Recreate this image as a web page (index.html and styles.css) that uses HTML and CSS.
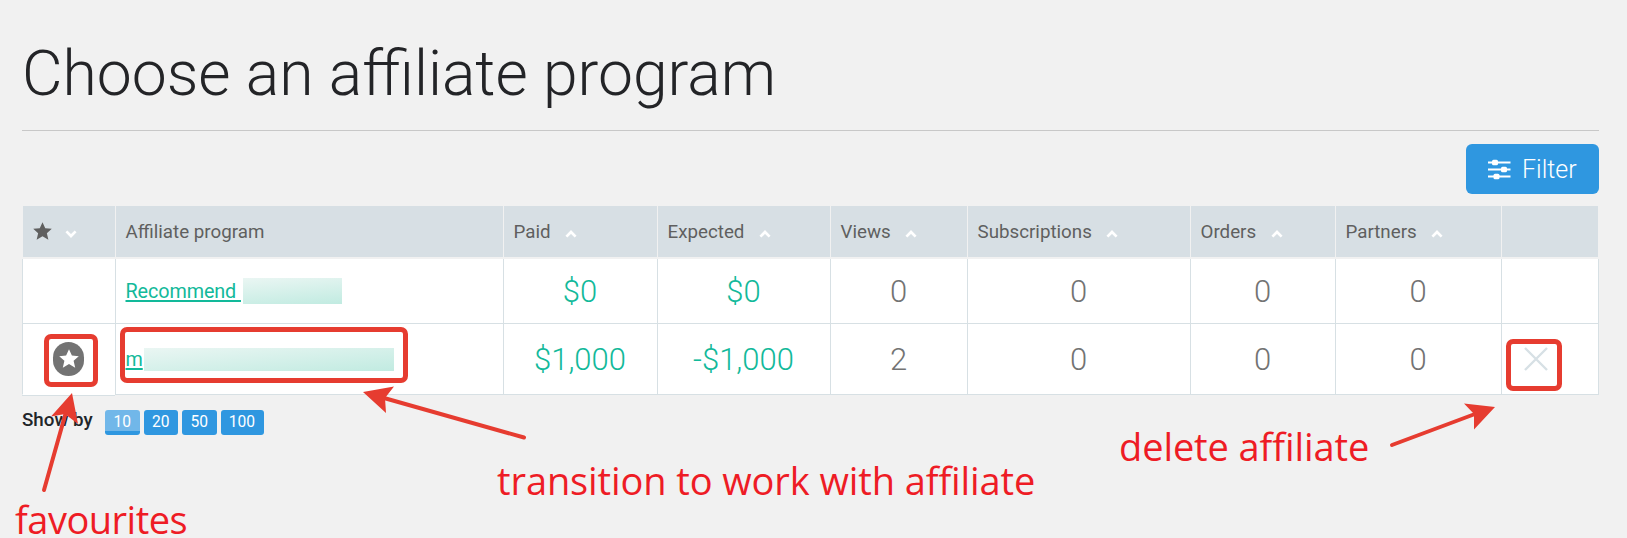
FILE: index.html
```html
<!DOCTYPE html>
<html lang="en">
<head>
    <meta charset="UTF-8">
    <meta name="viewport" content="width=device-width, initial-scale=1.0">
    <title>Choose an affiliate program</title>
    <link rel="stylesheet" href="styles.css">
</head>
<body>
    <svg class="defs" width="0" height="0">
        <symbol id="star" viewBox="0 0 20 19">
            <path d="M10 0.300l2.900 6.200 6.900.700-5.200 4.600 1.600 6.900-6.200-3.600-6.200 3.600 1.600-6.900L.2 7.200l6.900-.7z"/>
        </symbol>
        <symbol id="caret" viewBox="0 0 12 8">
            <path d="M1.400 6.600L6 2l4.600 4.600" fill="none" stroke="#fff" stroke-width="2.700"/>
        </symbol>
    </svg>

    <div class="container">
        <h1>Choose an affiliate program</h1>

        <div class="toolbar">
            <button class="btn-filter">
                <svg width="23" height="21" viewBox="0 0 23 21">
                    <path d="M0 3.500h22.500M0 10.500h22.500M0 17.500h22.500" stroke="#fff" stroke-width="2"/>
                    <rect x="4" y="0.700" width="6" height="5.600" rx="1.500" fill="#fff"/>
                    <rect x="13" y="7.700" width="6" height="5.600" rx="1.500" fill="#fff"/>
                    <rect x="5.500" y="14.700" width="6" height="5.600" rx="1.500" fill="#fff"/>
                </svg>
                <span>Filter</span>
            </button>
        </div>

        <table class="programs">
            <colgroup>
                <col class="col-fav">
                <col class="col-name">
                <col class="col-paid">
                <col class="col-expected">
                <col class="col-views">
                <col class="col-subs">
                <col class="col-orders">
                <col class="col-partners">
                <col class="col-delete">
            </colgroup>
            <thead>
                <tr>
                    <th><svg class="star"><use href="#star"/></svg><svg class="caret caret-down"><use href="#caret"/></svg></th>
                    <th>Affiliate program</th>
                    <th>Paid<svg class="caret"><use href="#caret"/></svg></th>
                    <th>Expected<svg class="caret"><use href="#caret"/></svg></th>
                    <th>Views<svg class="caret"><use href="#caret"/></svg></th>
                    <th>Subscriptions<svg class="caret"><use href="#caret"/></svg></th>
                    <th>Orders<svg class="caret"><use href="#caret"/></svg></th>
                    <th>Partners<svg class="caret"><use href="#caret"/></svg></th>
                    <th></th>
                </tr>
            </thead>
            <tbody>
                <tr class="row-first">
                    <td></td>
                    <td class="name"><div class="name-line"><a href="#">Recommend&nbsp;</a><span class="hidden-text hidden-short"></span></div></td>
                    <td class="money">$0</td>
                    <td class="money">$0</td>
                    <td>0</td>
                    <td>0</td>
                    <td>0</td>
                    <td>0</td>
                    <td></td>
                </tr>
                <tr class="row-second">
                    <td class="fav-cell"><span class="fav"><svg><use href="#star"/></svg></span></td>
                    <td class="name"><div class="name-line"><a href="#">m</a><span class="hidden-text hidden-long"></span></div></td>
                    <td class="money">$1,000</td>
                    <td class="money">-$1,000</td>
                    <td>2</td>
                    <td>0</td>
                    <td>0</td>
                    <td>0</td>
                    <td class="delete-cell">
                        <svg class="delete" viewBox="0 0 24 24">
                            <path d="M1 1l22 22M23 1L1 23" stroke="#d7e0e5" stroke-width="2.400"/>
                        </svg>
                    </td>
                </tr>
            </tbody>
        </table>

        <div class="pager">
            <b>Show by</b>
            <a class="page active" href="#">10</a>
            <a class="page" href="#">20</a>
            <a class="page" href="#">50</a>
            <a class="page page-wide" href="#">100</a>
        </div>
    </div>

    <!-- notes over the page -->
    <div class="frame frame-fav"></div>
    <div class="frame frame-name"></div>
    <div class="frame frame-delete"></div>

    <svg class="arrows" width="1627" height="538" viewBox="0 0 1627 538">
        <g stroke="#e63c30" stroke-width="4" stroke-linecap="round">
            <path d="M44 490L66 412"/>
            <path d="M524 437.500L384 398"/>
            <path d="M1392 445L1475 414"/>
        </g>
        <g fill="#e63c30">
            <path d="M72 393L51 416.500L65 414L78 424z"/>
            <path d="M363 392L394 386.500L385 398L386 413z"/>
            <path d="M1495 407L1464 403.500L1474 414L1474 429.500z"/>
        </g>
    </svg>

    <div class="note note-fav">favourites</div>
    <div class="note note-name">transition to work with affiliate</div>
    <div class="note note-delete">delete affiliate</div>
</body>
</html>
```
FILE: styles.css
```css
body {
    margin: 0;
    position: relative;
    height: 538px;
    overflow: hidden;
    background-color: #f1f1f1;
    font-family: Roboto, "Liberation Sans", sans-serif;
    color: #212529;
}
.defs {
    position: absolute;
}
.container {
    padding: 0 28px 0 22px;
}
h1 {
    box-sizing: border-box;
    height: 131px;
    margin: 0;
    padding-top: 36px;
    border-bottom: 1px solid #c8c8c8;
    font-size: 62.4px;
    font-weight: 300;
    line-height: 75px;
    color: #232427;
}
.toolbar {
    display: flex;
    justify-content: flex-end;
    padding: 13px 0 12px;
}
.btn-filter {
    display: flex;
    align-items: center;
    gap: 11px;
    width: 133px;
    height: 50px;
    padding: 0 0 0 22px;
    border: none;
    border-radius: 6px;
    background-color: #2f97e0;
    color: #fff;
    font-family: inherit;
    font-size: 25px;
    font-weight: 300;
}
.programs {
    width: 1577px;
    table-layout: fixed;
    border-collapse: separate;
    border-spacing: 0;
}
.col-fav { width: 93px; }
.col-name { width: 388px; }
.col-paid { width: 154px; }
.col-expected { width: 173px; }
.col-views { width: 137px; }
.col-subs { width: 223px; }
.col-orders { width: 145px; }
.col-partners { width: 166px; }
.col-delete { width: 98px; }
.programs th {
    box-sizing: border-box;
    height: 53px;
    padding: 0 0 0 9.5px;
    border-left: 1px solid #f1f1f1;
    border-bottom: 2px solid #f1f1f1;
    background-color: #d7dfe4;
    color: #5f5f5f;
    font-size: 18.75px;
    font-weight: 400;
    text-align: left;
    white-space: nowrap;
}
.programs th:last-child {
    border-right: 1px solid #f1f1f1;
}
.programs td {
    box-sizing: border-box;
    padding: 2px 1px 0 0;
    border-left: 1px solid #d7e0e4;
    border-bottom: 1px solid #d7e0e4;
    background-color: #fff;
    color: #737373;
    font-size: 31px;
    font-weight: 300;
    line-height: 36px;
    text-align: center;
}
.programs td:last-child {
    border-right: 1px solid #d7e0e4;
}
.row-first td {
    height: 65px;
}
.row-second td {
    height: 71px;
}
.programs td.money {
    color: #12b99a;
}
.programs td.name {
    padding: 0 0 0 9.5px;
    font-size: 19.8px;
    font-weight: 400;
    text-align: left;
}
.programs td.fav-cell,
.programs td.delete-cell {
    padding-top: 0;
}
.programs td.fav-cell {
    border-bottom-color: #fff;
    box-shadow: 0 1px #d7e0e4, -1px 0 0 -1px #d7e0e4;
}
.name-line {
    display: flex;
    align-items: center;
}
.name a {
    padding-top: 1px;
    color: #12b99a;
    letter-spacing: -0.1px;
    text-decoration: underline;
    text-decoration-thickness: 2px;
    text-underline-offset: 2px;
}
.hidden-text {
    background: linear-gradient(175deg, #eaf6f3, #c1ebe1);
}
.hidden-short {
    width: 99px;
    height: 26px;
    margin-left: 2px;
}
.hidden-long {
    width: 250px;
    height: 23px;
    margin-left: 1px;
}
.star {
    width: 19px;
    height: 18px;
    fill: #5f5f5f;
    vertical-align: -2px;
}
.caret {
    width: 12px;
    height: 8px;
    margin-left: 14.5px;
}
.caret-down {
    margin-left: 13px;
    transform: rotate(180deg);
}
.fav {
    display: inline-flex;
    align-items: center;
    justify-content: center;
    width: 31px;
    height: 34px;
    border-radius: 16px;
    background-color: #737373;
    vertical-align: middle;
    margin-bottom: 2px;
}
.fav svg {
    width: 20px;
    height: 19px;
    fill: #fff;
}
.delete {
    display: block;
    width: 24px;
    height: 24px;
    margin-left: 22px;
}
.pager {
    display: flex;
    align-items: center;
    gap: 4px;
    margin-top: 15px;
}
.pager b {
    width: 79px;
    margin-top: -4px;
    font-size: 18.75px;
    font-weight: 500;
    line-height: 25px;
}
.page {
    box-sizing: border-box;
    width: 34.5px;
    height: 25px;
    border-radius: 3px;
    background-color: #2f97e0;
    color: #fff;
    font-size: 15.6px;
    font-weight: 400;
    line-height: 24px;
    text-align: center;
    text-decoration: none;
}
.page-wide {
    width: 43px;
}
.page.active {
    background-color: #71b7e9;
    border-bottom: 4px solid #2f97e0;
}
.frame {
    position: absolute;
    box-sizing: border-box;
    border: 5px solid #e63c30;
    border-radius: 7px;
}
.frame-fav {
    left: 44px;
    top: 334px;
    width: 54px;
    height: 53px;
}
.frame-name {
    left: 120px;
    top: 327px;
    width: 288px;
    height: 56px;
}
.frame-delete {
    left: 1506px;
    top: 339px;
    width: 56px;
    height: 52px;
}
.arrows {
    position: absolute;
    left: 0;
    top: 0;
}
.note {
    position: absolute;
    color: #ee1c25;
    font-family: "Open Sans", "Noto Sans", sans-serif;
    font-size: 38px;
    line-height: 38px;
    white-space: nowrap;
    font-variant-ligatures: none;
}
.note-fav {
    left: 15px;
    top: 500px;
    letter-spacing: -0.5px;
}
.note-name {
    left: 497px;
    top: 461px;
    letter-spacing: -0.1px;
}
.note-delete {
    left: 1119px;
    top: 427px;
    letter-spacing: -0.1px;
}
```
